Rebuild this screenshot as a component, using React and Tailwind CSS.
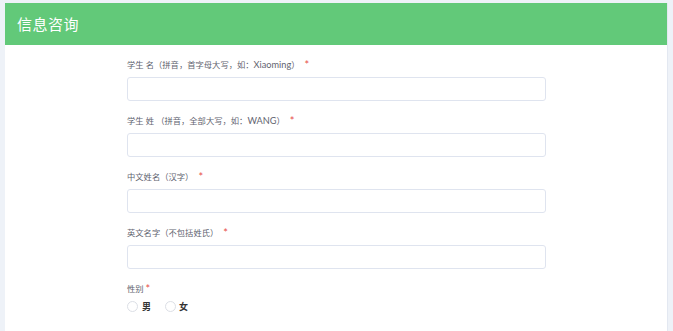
import React from "react";

const fields = [
  ["学生 名（拼音，首字母大写，如：", "Xiaoming", "）"],
  ["学生 姓 （拼音，全部大写，如：", "WANG", "）"],
  ["中文姓名（汉字）"],
  ["英文名字（不包括姓氏）"],
];

function Label({ parts }) {
  return (
    <div className="h-[14px] leading-[14px] text-[8.3px] text-[#5f6470] flex items-center">
      <span>
        {parts.map((p, i) =>
          i === 1 ? (
            <span key={i} className="text-[9.2px]">{p}</span>
          ) : (
            <span key={i}>{p}</span>
          )
        )}
      </span>
      <span className="ml-[5px] text-[11px] text-[#e8504a]">*</span>
    </div>
  );
}

export default function App() {
  return (
    <div
      className="w-[673px] h-[331px] bg-[#eef2f8] pt-[3px] pl-[5px] pr-[5px] overflow-hidden"
      style={{ fontFamily: "Lato, 'Noto Sans CJK SC', sans-serif" }}
    >
      <div className="bg-white h-[400px] border-r border-[#e3e8f1]">
        <div className="h-[42px] bg-[#62c979] flex items-center pl-[12px]">
          <span className="text-white text-[15px] tracking-[0.5px]">信息咨询</span>
        </div>
        <div className="w-[420px] mx-auto pt-[13px] flex flex-col pl-[1px]">
          {fields.map((f) => (
            <div key={f[0]} className="flex flex-col mb-[13px]">
              <Label parts={f} />
              <div className="mt-[5px] h-[24px] rounded-[3px] border border-[#dfe4ef] bg-white" />
            </div>
          ))}
          <div className="flex flex-col">
            <div className="h-[14px] leading-[14px] text-[8.3px] text-[#5f6470] flex items-center">
              <span>性别</span>
              <span className="ml-[2px] text-[11px] text-[#e8504a]">*</span>
            </div>
            <div className="mt-[4px] flex items-center text-[9px] text-[#333]">
              <span className="w-[11px] h-[11px] rounded-full border border-[#dcdfe6] bg-white" />
              <span className="ml-[4px] font-bold">男</span>
              <span className="ml-[14px] w-[11px] h-[11px] rounded-full border border-[#dcdfe6] bg-white" />
              <span className="ml-[3px] font-bold">女</span>
            </div>
          </div>
        </div>
      </div>
    </div>
  );
}
